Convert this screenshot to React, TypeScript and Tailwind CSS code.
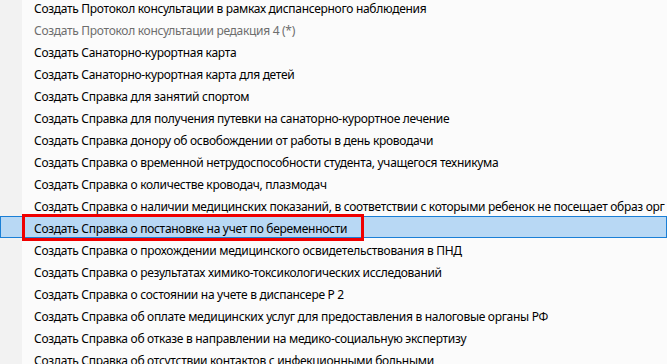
const items: { label: string; disabled?: boolean; selected?: boolean }[] = [
  { label: 'Создать Протокол консультации в рамках диспансерного наблюдения' },
  { label: 'Создать Протокол консультации редакция 4 (*)', disabled: true },
  { label: 'Создать Санаторно-курортная карта' },
  { label: 'Создать Санаторно-курортная карта для детей' },
  { label: 'Создать Справка для занятий спортом' },
  { label: 'Создать Справка для получения путевки на санаторно-курортное лечение' },
  { label: 'Создать Справка донору об освобождении от работы в день кроводачи' },
  { label: 'Создать Справка о временной нетрудоспособности студента, учащегося техникума' },
  { label: 'Создать Справка о количестве кроводач, плазмодач' },
  {
    label:
      'Создать Справка о наличии медицинских показаний, в соответствии с которыми ребенок не посещает образ орг',
  },
  { label: 'Создать Справка о постановке на учет по беременности', selected: true },
  { label: 'Создать Справка о прохождении медицинского освидетельствования в ПНД' },
  { label: 'Создать Справка о результатах химико-токсикологических исследований' },
  { label: 'Создать Справка о состоянии на учете в диспансере Р 2' },
  { label: 'Создать Справка об оплате медицинских услуг для предоставления в налоговые органы РФ' },
  { label: 'Создать Справка об отказе в направлении на медико-социальную экспертизу' },
  { label: 'Создать Справка об отсутствии контактов с инфекционными больными' },
];

export default function App() {
  return (
    <div className="relative w-[667px] h-[364px] overflow-hidden bg-[#fbfbfb] font-['Noto_Sans',sans-serif] text-[12px] tracking-[-0.3px]">
      <div className="flex flex-col -mt-[4px]">
        {items.map((item) =>
          item.selected ? (
            <div
              key={item.label}
              className="relative flex h-[22px] items-center border border-[#1a7fd6] bg-[#b8d8f4]"
            >
              <div className="w-[33px] shrink-0" />
              <span className="whitespace-nowrap pt-[3px] text-black">{item.label}</span>
              {/* annotation frame */}
              <div className="absolute left-[21px] top-[-3px] h-[27px] w-[342px] border-[3px] border-[#f00000]" />
            </div>
          ) : (
            <div key={item.label} className="flex h-[22px] items-center">
              <div className="w-[22px] h-full shrink-0 bg-[#f2f2f2]" />
              <span
                className={`ml-[12px] whitespace-nowrap pt-[3px] ${item.disabled ? 'text-[#6d6d6d]' : 'text-black'}`}
              >
                {item.label}
              </span>
            </div>
          ),
        )}
      </div>
    </div>
  );
}
